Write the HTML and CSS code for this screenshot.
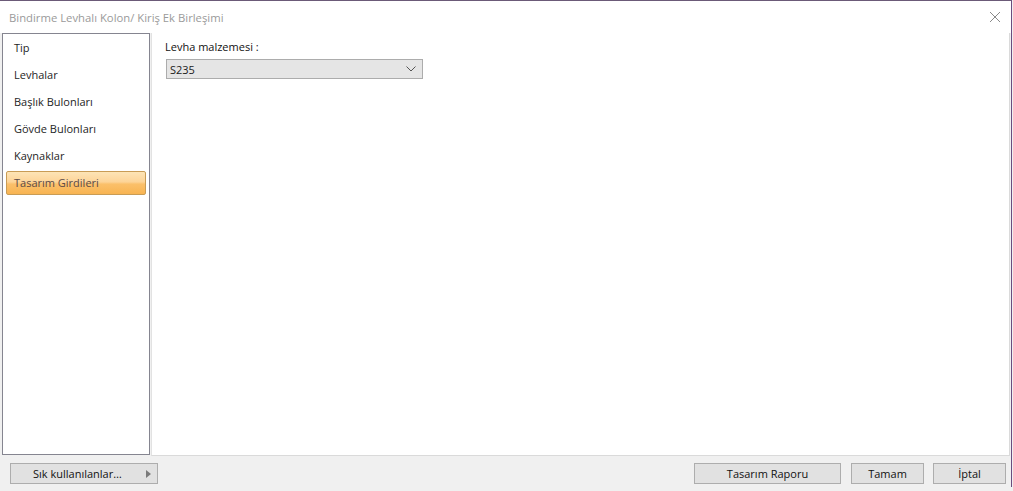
FILE: index.html
```html
<!DOCTYPE html>
<html>
<head>
<meta charset="utf-8">
<link rel="stylesheet" href="styles.css">
</head>
<body>
<div class="window">
  <div class="titlebar">
    <span class="title">Bindirme Levhalı Kolon/ Kiriş Ek Birleşimi</span>
    <svg class="close" width="12" height="12" viewBox="0 0 12 12"><path d="M1 1 L11 11 M11 1 L1 11" stroke="#8a8a8a" stroke-width="1" fill="none"/></svg>
  </div>
  <div class="content">
    <div class="nav">
      <div class="nav-item">Tip</div>
      <div class="nav-item">Levhalar</div>
      <div class="nav-item">Başlık Bulonları</div>
      <div class="nav-item">Gövde Bulonları</div>
      <div class="nav-item">Kaynaklar</div>
      <div class="nav-item selected">Tasarım Girdileri</div>
    </div>
    <div class="main">
      <div class="label">Levha malzemesi :</div>
      <div class="combo">
        <span>S235</span>
        <svg width="10" height="6" viewBox="0 0 10 6"><path d="M0.5 0.5 L5 5 L9.5 0.5" stroke="#555" stroke-width="1" fill="none"/></svg>
      </div>
    </div>
  </div>
  <div class="footer">
    <div class="btn fav"><span>Sık kullanılanlar…</span><svg width="5" height="8" viewBox="0 0 5 8"><path d="M0 0 L5 4 L0 8 Z" fill="#7a7a7a"/></svg></div>
    <div class="spacer"></div>
    <div class="btn report">Tasarım Raporu</div>
    <div class="btn ok">Tamam</div>
    <div class="btn cancel">İptal</div>
  </div>
</div>
</body>
</html>
```
FILE: styles.css
```css
html, body {
  margin: 0;
  padding: 0;
  background: #f0f0f0;
}
body {
  width: 1013px;
  height: 491px;
  overflow: hidden;
  font-family: "Open Sans", "Liberation Sans", sans-serif;
  font-size: 11px;
  color: #1a1a1a;
}
.window {
  width: 1012px;
  height: 487px;
  display: flex;
  flex-direction: column;
  background: #f0f0f0;
  border-top: 1px solid #6b5a78;
  border-right: 1px solid #6b4c7f;
  box-sizing: border-box;
}
.titlebar {
  height: 32px;
  background: #ffffff;
  display: flex;
  align-items: center;
  padding-left: 9px;
  padding-right: 10px;
  flex: none;
}
.title {
  color: #9a9a9a;
  font-size: 11.3px;
  flex: 1;
}
.close { flex: none; }
.content {
  display: flex;
  height: 423px;
  flex: none;
  padding-left: 2px;
  padding-right: 1px;
  gap: 1px;
}
.nav {
  width: 148px;
  box-sizing: border-box;
  border: 1px solid #858590;
  background: #fff;
  height: 422px;
  padding: 0 3px 0 3px;
  display: flex;
  flex-direction: column;
}
.nav-item {
  height: 27px;
  line-height: 27px;
  padding-left: 8px;
  color: #1e1e1e;
}
.nav-item.selected {
  height: 24px;
  line-height: 22px;
  margin-top: 2px;
  box-sizing: border-box;
  border: 1px solid #c99c55;
  border-radius: 2px;
  background: linear-gradient(#fde4b6 0%, #fdd498 45%, #fbc06a 55%, #f8b452 100%);
  color: #5b4a48;
  padding-left: 7px;
}
.main {
  flex: 1;
  background: #fff;
  border-left: 1px solid #e2e2e2;
  border-right: 1px solid #dadada;
  border-bottom: 1px solid #dadada;
  padding: 5px 0 0 13px;
}
.label {
  height: 17px;
  line-height: 17px;
  color: #111;
}
.combo {
  width: 257px;
  height: 20px;
  box-sizing: border-box;
  margin-top: 4px;
  background: #e5e5e5;
  border: 1px solid #acacac;
  display: flex;
  align-items: center;
  justify-content: space-between;
  padding: 0 6px 0 3px;
  margin-left: 1px;
}
.footer {
  flex: 1;
  display: flex;
  align-items: flex-start;
  padding: 7px 5px 0 10px;
  gap: 9px;
}
.btn {
  height: 21px;
  box-sizing: border-box;
  background: #e1e1e1;
  border: 1px solid #adadad;
  display: flex;
  align-items: center;
  justify-content: center;
  color: #111;
}
.fav {
  width: 148px;
  justify-content: space-between;
  padding: 0 6px 0 22px;
}
.spacer { flex: 1; }
.report { width: 147px; margin-right: 1px; }
.ok { width: 73px; }
.cancel { width: 73px; }
```
